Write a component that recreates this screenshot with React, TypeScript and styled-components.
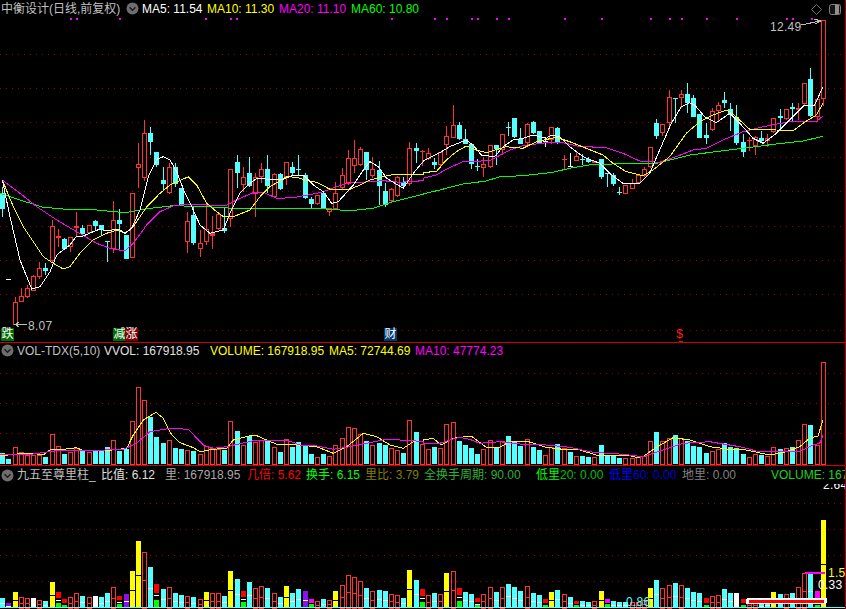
import React from "react";
import styled, { createGlobalStyle } from "styled-components";

const Global = createGlobalStyle`
  html, body { margin: 0; padding: 0; background: #000; overflow: hidden; }
  body { font-family: "Liberation Sans", "Noto Sans CJK SC", sans-serif; }
`;

const Screen = styled.div`
  width: 846px;
  height: 609px;
  box-sizing: border-box;
  border-right: 1px solid #a80000;
  background: #000;
  display: flex;
  flex-direction: column;
  overflow: hidden;
  position: relative;
`;
const Pane = styled.section<{ $h: number; $top?: boolean }>`
  height: ${(p) => p.$h}px;
  flex: 0 0 auto;
  box-sizing: border-box;
  border-top: ${(p) => (p.$top ? "1px solid #d00000" : "none")};
  position: relative;
  overflow: hidden;
  display: flex;
  flex-direction: column;
`;
const Legend = styled.header<{ $h: number }>`
  height: ${(p) => p.$h}px;
  flex: 0 0 auto;
  display: flex;
  align-items: center;
  padding-left: 1px;
  white-space: pre;
  font-size: 12px;
  line-height: 14px;
  overflow: hidden;
`;
const Item = styled.span<{ $c: string; $w: number }>`
  color: ${(p) => p.$c};
  flex: 0 0 ${(p) => p.$w}px;
  overflow: hidden;
`;
const Sub = styled.span<{ $c: string }>`
  color: ${(p) => p.$c};
`;
const Disc = styled.svg`
  flex: 0 0 13px;
  width: 13px;
  height: 13px;
  margin-right: 3px;
`;
const Plot = styled.svg`
  display: block;
  flex: 1 1 0;
  min-height: 0;
  width: 846px;
  shape-rendering: crispEdges;
`;
const Label = styled.text<{ $c: string }>`
  fill: ${(p) => p.$c};
  font-family: "Liberation Sans", sans-serif;
  font-size: 12px;
  letter-spacing: 0.3px;
`;
const Badge = styled.span<{ $x: number; $bg: string; $c?: string }>`
  position: absolute;
  left: ${(p) => p.$x}px;
  bottom: 1px;
  width: 13px;
  height: 13px;
  background: ${(p) => p.$bg};
  color: ${(p) => p.$c || "#fff"};
  font-size: 12px;
  line-height: 13px;
  text-align: center;
`;
const Tools = styled.div`
  position: absolute;
  top: 4px;
  right: 4px;
  display: flex;
  gap: 7px;
  align-items: center;
`;

const RED = "#ff3232";
const CYAN = "#54ffff";
const YEL = "#ffff00";
const MAG = "#ff00ff";
const GRN = "#00ff00";

type K = "r" | "c" | "w" | "f";
// top, bottom, high, low, kind  (screen pixels)
const C: [number, number, number, number, K][] = [
  [193,209,187,217,"c"],[279,280,279,280,"w"],[302,325,297,325,"r"],[296,302,288,302,"r"],[288,297,285,298,"r"],[276,291,275,291,"r"],
  [268,277,262,279,"r"],[268,271,263,275,"c"],[226,261,220,262,"r"],[236,238,229,247,"f"],[239,249,238,250,"c"],[237,247,237,252,"r"],
  [226,228,212,237,"f"],[228,234,225,236,"c"],[225,233,225,234,"r"],[221,226,220,230,"c"],[225,230,225,235,"c"],[241,242,241,262,"c"],
  [220,249,201,253,"r"],[220,224,209,250,"c"],[235,259,235,259,"c"],[193,258,193,258,"r"],[164,168,143,188,"r"],[133,178,120,181,"r"],
  [133,142,127,155,"c"],[152,165,152,167,"c"],[180,184,167,190,"c"],[167,193,163,194,"r"],[167,184,163,187,"c"],[188,205,188,205,"c"],
  [221,242,212,253,"r"],[215,243,207,245,"c"],[243,249,230,257,"r"],[229,242,205,245,"r"],[233,236,216,249,"f"],[214,229,213,230,"r"],
  [228,231,207,233,"c"],[169,219,169,227,"r"],[162,173,155,188,"c"],[177,185,167,192,"r"],[173,186,157,187,"c"],[177,194,173,217,"r"],
  [169,177,163,183,"r"],[169,186,155,193,"c"],[174,197,173,198,"r"],[174,189,173,190,"c"],[162,177,162,185,"r"],[167,173,162,175,"c"],
  [169,170,155,175,"c"],[175,198,173,199,"c"],[199,204,197,208,"c"],[195,204,195,205,"r"],[193,208,192,209,"c"],[208,212,208,216,"r"],
  [193,209,182,210,"r"],[175,188,168,190,"r"],[158,183,150,185,"r"],[158,166,140,173,"r"],[149,165,147,166,"r"],[152,170,152,180,"c"],
  [169,176,157,178,"r"],[170,186,161,205,"c"],[191,205,183,207,"c"],[189,201,188,202,"r"],[177,196,176,197,"r"],[182,186,177,189,"c"],
  [148,184,142,186,"r"],[148,151,143,163,"c"],[151,152,150,166,"f"],
  [153,159,148,160,"r"],[162,165,158,169,"c"],[152,165,152,168,"r"],[136,145,126,155,"r"],[125,138,105,138,"r"],[125,139,122,140,"c"],
  [139,144,129,144,"c"],[144,164,143,169,"c"],[166,167,159,171,"c"],[164,168,157,177,"r"],[145,167,145,168,"r"],[145,149,145,165,"c"],
  [134,150,134,155,"r"],[127,128,122,136,"c"],[118,137,118,138,"c"],[139,144,128,144,"c"],[124,143,123,146,"r"],[122,133,121,134,"c"],
  [131,144,131,144,"c"],[141,142,137,147,"w"],[127,140,127,144,"r"],[128,143,127,144,"c"],[159,160,155,169,"r"],[166,167,153,167,"w"],
  [156,161,152,161,"r"],[159,160,154,165,"c"],[159,162,157,163,"c"],[161,163,161,163,"f"],[159,177,159,179,"c"],[173,174,173,187,"c"],
  [175,184,173,186,"c"],[192,193,187,195,"c"],[185,194,185,194,"r"],[183,189,179,189,"r"],[175,183,175,183,"r"],[169,176,167,177,"r"],
  [147,167,147,168,"r"],[123,136,119,139,"c"],[124,133,124,136,"r"],[97,123,90,127,"r"],[98,99,98,123,"c"],[94,98,90,108,"r"],
  [94,103,83,113,"c"],[98,117,95,117,"c"],[114,138,114,138,"c"],[135,138,123,144,"c"],[111,130,108,131,"r"],[105,111,102,122,"r"],
  [100,103,92,108,"c"],[109,115,103,131,"c"],[117,143,105,145,"c"],[142,152,134,157,"c"],[140,141,137,151,"f"],[137,146,136,155,"r"],
  [138,141,131,143,"c"],[138,141,134,147,"r"],[118,132,118,133,"r"],[116,118,109,131,"c"],[109,119,109,120,"r"],[107,109,103,122,"c"],
  [108,110,103,120,"f"],[83,104,83,105,"r"],[79,116,68,117,"c"],[99,117,98,122,"r"],[20,99,20,106,"r"],
];

// positive: red bar, negative: cyan bar (zoomed units of the volume pane)
const V = [
  -340,-357,322,337,344,344,345,-351,283,319,-342,336,323,-331,335,-333,-333,-322,301,-332,-327,244,142,181,
  -231,-291,-309,301,-324,-327,331,-333,343,318,324,328,-331,244,-273,315,-287,307,301,-303,322,-336,298,-321,-306,-316,-342,352,-342,349,316,295,262,265,282,-303,316,-309,-315,324,330,-339,241,-276,312,
  328,-321,325,253,247,-303,-315,-324,-342,328,301,-322,304,-288,-304,-317,298,-322,-330,346,322,-313,325,-337,349,-348,-351,351,-315,-345,-348,-354,355,353,352,349,304,-276,304,295,-285,293,-303,-318,-321,-339,333,328,-309,-320,-323,-342,351,343,-344,348,322,-327,325,-321,301,253,-255,316,67,
];

type R = { k: "c" | "r" | "y" | "w" | "p"; t: number } | { k: "s" | "m"; t: number; b: number; g: number };
const c = (t: number): R => ({ k: "c", t });
const r = (t: number): R => ({ k: "r", t });
const y = (t: number): R => ({ k: "y", t });
const w = (t: number): R => ({ k: "w", t });
const p = (t: number): R => ({ k: "p", t });
const s = (t: number, b: number, g: number): R => ({ k: "s", t, b, g });
const m = (t: number, b: number, g: number): R => ({ k: "m", t, b, g });
const Q: R[] = [
  c(399),p(414),y(381),r(397),r(400),w(400),r(406),c(408),y(351),s(381,399,414),s(402,414,419),r(397),r(385),c(393),r(397),w(393),c(397),c(384),r(366),s(393,405,417),p(388),y(318),y(228),r(262),
  c(306),s(357,384,405),c(372),r(366),c(384),c(391),r(394),c(396),r(403),y(381),r(385),r(385),c(393),y(318),c(342),s(378,396,411),c(351),r(369),r(363),c(369),r(384),c(396),y(363),c(384),c(372),p(378),m(402,415,417),r(408),c(402),r(405),y(378),r(360),r(331),r(337),r(348),c(369),r(378),c(375),c(378),r(387),r(390),c(399),y(315),c(345),s(372,393,411),
  r(390),c(384),r(387),y(324),r(318),s(369,390,408),c(381),c(387),s(399,412,420),r(387),r(366),c(381),r(366),c(357),c(366),c(378),r(363),c(384),c(390),s(402,414,420),y(381),c(375),r(387),c(396),s(408,417,421),c(408),c(411),r(408),y(378),m(402,415,417),c(408),c(411),c(411),r(411),r(411),r(405),y(369),c(345),r(369),r(360),c(354),r(360),c(369),c(381),c(384),s(399,413,420),r(393),r(390),c(372),c(384),w(384),s(402,414,420),r(411),r(408),c(415),c(411),y(381),c(387),r(387),c(384),r(366),r(324),c(328),m(378,405,420),y(165),
];

const px = (i: number) => Math.floor(2.67 + 6.17 * i);
const conv = (a: number[], ox: number, oy: number) => {
  const out: string[] = [];
  for (let i = 0; i < a.length; i += 2) out.push(`${(a[i] / 3 + ox).toFixed(1)},${(a[i + 1] / 3 + oy).toFixed(1)}`);
  return out.join(" ");
};
const line = (l: number[], rr: number[], oy: number, roy = oy) => `${conv(l, 0, oy)} ${conv(rr, 423, roy)}`;

const MA5 = line(
  [7,90,30,200,60,330,95,417,120,410,150,365,170,315,190,300,210,285,230,258,250,258,280,245,300,237,320,243,355,237,375,250,395,235,420,180,445,80,470,28,490,20,510,30,530,65,555,130,575,170,600,225,630,250,670,240,690,190,720,130,750,100,770,85,810,88,850,88,880,75,910,75,940,105,970,125,995,160,1015,155,1060,105,1090,60,1110,35,1135,50,1160,85,1210,115,1240,70,1269,35],
  [0,483,25,470,50,458,80,440,130,420,150,435,175,465,215,470,240,440,270,420,300,415,330,405,370,415,385,405,410,410,440,440,480,470,530,490,560,520,600,550,650,550,680,520,710,450,745,370,775,320,800,308,815,315,845,350,880,368,920,340,960,380,990,415,1020,430,1060,400,1100,360,1145,315,1175,315,1200,260],
  150, 0
);
const MA10 = line(
  [7,90,40,170,70,230,100,275,130,320,160,340,190,357,210,350,240,310,280,270,320,250,350,240,375,250,400,230,440,170,480,130,510,105,565,80,590,105,620,160,650,185,670,200,700,200,750,180,780,140,810,110,860,80,890,82,920,92,950,97,990,118,1045,120,1080,105,1110,90,1150,80,1185,72,1269,72],
  [0,517,40,515,70,480,100,455,130,438,160,450,190,458,250,440,300,445,340,425,400,412,440,425,490,445,540,465,570,490,610,515,660,527,690,510,740,470,790,400,830,365,870,345,910,330,930,342,980,388,1060,390,1110,393,1140,370,1180,345,1200,310],
  150, 0
);
const MA20 = line(
  [7,90,60,130,110,170,170,210,230,245,290,280,330,295,375,303,400,280,440,225,480,185,520,168,560,162,620,165,680,165,720,145,760,128,790,127,830,145,880,143,960,128,1040,100,1110,95,1150,92,1200,97,1269,92],
  [0,535,40,525,75,505,120,485,200,482,260,450,300,437,370,428,420,428,470,440,545,442,600,460,650,483,710,487,760,470,810,450,850,445,900,420,960,395,1020,380,1100,365,1180,365,1200,348],
  150, 0
);
const MA60 = line(
  [0,130,60,150,130,172,200,178,290,180,375,188,450,175,520,167,620,170,700,175,950,175,1050,182,1120,175,1180,155,1269,133],
  [0,582,50,570,120,552,190,543,230,530,300,527,390,517,440,505,510,493,700,490,800,465,960,445,1060,432,1140,423,1200,409],
  150, 0
);
const VY = line(
  [0,348,50,342,100,340,130,345,150,330,190,328,230,323,250,332,330,331,380,325,400,285,430,240,468,217,490,235,515,285,540,308,580,323,600,335,640,328,680,325,700,300,750,287,770,287,800,300,830,313,890,315,950,320,1000,340,1040,320,1090,280,1130,290,1170,315,1210,325,1240,305,1269,303],
  [0,300,30,295,55,315,90,295,145,288,190,322,230,322,260,305,310,303,370,322,420,328,470,330,520,345,610,345,640,352,660,350,700,322,750,293,800,300,860,320,920,328,970,330,1040,345,1090,335,1130,320,1160,295,1185,288,1200,240],
  340
);
const VM = line(
  [0,345,100,342,170,332,260,332,370,328,410,310,450,275,510,265,565,268,610,315,640,325,680,320,700,316,770,300,860,300,900,315,950,318,1000,328,1050,320,1090,312,1160,298,1240,302,1269,305],
  [0,310,50,310,80,300,110,292,140,298,170,310,230,305,300,313,370,315,440,322,510,337,600,343,660,350,720,330,780,310,860,305,950,320,1000,333,1130,335,1170,315,1190,310,1200,285],
  340
);

const DOTS = [210,228,357,615,690,708,1173].map((v) => v / 3).concat([33,69,144,162,219,255,423,534,681,738,774,849,939,1089,1107,1164].map((v) => v / 3 + 423));

const GridLines = ({ ys }: { ys: number[] }) => (
  <>
    {ys.map((v) => (
      <line key={v} x1={0} x2={845} y1={v + 0.5} y2={v + 0.5} stroke="#a00000" strokeDasharray="1 5" />
    ))}
  </>
);

const Chevron = () => (
  <Disc viewBox="0 0 13 13">
    <circle cx="6.5" cy="6.5" r="6" fill="#6e6e6e" />
    <path d="M3.5 5.2 L6.5 8.2 L9.5 5.2" fill="none" stroke="#1c1c1c" strokeWidth="1.4" />
  </Disc>
);

const MainPlot = () => (
  <Plot viewBox="0 17 846 325">
    <GridLines ys={[54, 88, 122, 157, 191, 226, 260, 294, 330]} />
    {DOTS.map((d, i) => (
      <rect key={i} x={Math.floor(d)} y={18} width={2} height={2} fill={MAG} />
    ))}
    {C.map(([t, b, h, l, k], i) => {
      const x = px(i);
      const col = k === "c" ? CYAN : k === "w" ? "#fff" : RED;
      return (
        <g key={i}>
          <line x1={x + 0.5} x2={x + 0.5} y1={h} y2={l} stroke={col} />
          {k === "c" || b - t < 2 ? (
            <rect x={x - 2} y={t} width={5} height={Math.max(b - t, 1)} fill={col} />
          ) : (
            <rect x={x - 1.5} y={t + 0.5} width={4} height={b - t - 1} fill={k === "f" ? col : "#000"} stroke={col} />
          )}
        </g>
      );
    })}
    <polyline points={MA60} fill="none" stroke={GRN} />
    <polyline points={MA20} fill="none" stroke={MAG} />
    <polyline points={MA10} fill="none" stroke={YEL} />
    <polyline points={MA5} fill="none" stroke="#fff" />
    <Label $c="#c0c0c0" x={770} y={31}>12.49</Label>
    <path d="M801 25 L820 21 M814 19 L821 21 L815 24" fill="none" stroke="#c0c0c0" />
    <Label $c="#c0c0c0" x={28} y={330}>8.07</Label>
    <path d="M27 324.5 L15 324.5 M19 322 L15 324.5 L19 327" fill="none" stroke="#c0c0c0" />
    <rect x={679} y={340} width={4} height={2} fill="#ff0000" />
  </Plot>
);

const VolumePlot = () => (
  <Plot viewBox="0 358 846 107">
    <GridLines ys={[373, 403, 433]} />
    {V.map((v, i) => {
      const x = px(i);
      const top = Math.round(Math.abs(v) / 3 + 340);
      return v < 0 ? (
        <rect key={i} x={x - 2} y={top} width={5} height={464 - top} fill={CYAN} />
      ) : (
        <rect key={i} x={x - 1.5} y={top + 0.5} width={4} height={463.5 - top} fill="#000" stroke={RED} />
      );
    })}
    <polyline points={VY} fill="none" stroke={YEL} />
    <polyline points={VM} fill="none" stroke={MAG} />
  </Plot>
);

const toY = (z: number) => Math.round(z / 3 + 465);
const BASE = 608;
const RatioPlot = () => (
  <Plot viewBox="0 484 846 125">
    <GridLines ys={[503, 529, 555, 581]} />
    {Q.map((q, i) => {
      const x = px(i);
      const t = toY(q.t);
      if (q.k === "s" || q.k === "m") {
        const b = toY(q.b);
        const g = toY(q.g);
        return (
          <g key={i}>
            <rect x={x - 2} y={t} width={5} height={b - t} fill={q.k === "s" ? "#ff0000" : MAG} />
            <rect x={x - 2} y={b + 2} width={5} height={1} fill="#fff" />
            <rect x={x - 2} y={g} width={5} height={BASE - g} fill={GRN} />
          </g>
        );
      }
      const mid = Math.round((t + BASE) / 2);
      if (q.k === "r")
        return (
          <g key={i}>
            <rect x={x - 1.5} y={t + 0.5} width={4} height={BASE - t} fill="#000" stroke={RED} />
            <rect x={x - 1} y={mid} width={3} height={1} fill={RED} />
          </g>
        );
      const col = q.k === "c" ? CYAN : q.k === "y" ? YEL : q.k === "w" ? "#fff" : "#8a10f0";
      const tick = q.k === "c" ? "#fff" : q.k === "y" ? "#000" : q.k === "p" ? "#fff" : "#000";
      return (
        <g key={i}>
          <rect x={x - 2} y={t} width={5} height={BASE - t} fill={col} />
          {q.k !== "w" && <rect x={x - 2} y={mid} width={5} height={1} fill={tick} />}
        </g>
      );
    })}
    <rect x={0} y={607} width={845} height={1} fill={CYAN} />
    <Label $c="#ffffff" x={823} y={489}>2.64</Label>
    <Label $c={CYAN} x={626} y={606}>0.86</Label>
    <rect x={805} y={572} width={20} height={2} fill={MAG} />
    <Label $c={YEL} x={828} y={577}>1.5</Label>
    <Label $c="#ffffff" x={818} y={589}>0.33</Label>
    <rect x={746} y={598} width={81} height={6} rx={2} fill="#fff" />
    <rect x={749} y={600} width={75} height={3} fill="#ff0000" />
  </Plot>
);

export default function App() {
  return (
    <Screen>
      <Global />
      <Pane $h={342}>
        <Legend $h={17}>
          <Item $c="#c0c0c0" $w={125}>中衡设计(日线,前复权)</Item>
          <Chevron />
          <Item $c="#ffffff" $w={65}>MA5: 11.54</Item>
          <Item $c={YEL} $w={72}>MA10: 11.30</Item>
          <Item $c={MAG} $w={72}>MA20: 11.10</Item>
          <Item $c={GRN} $w={72}>MA60: 10.80</Item>
        </Legend>
        <MainPlot />
        <Badge $x={1} $bg="#006c00">跌</Badge>
        <Badge $x={113} $bg="#006c00">减</Badge>
        <Badge $x={125} $bg="#800000">涨</Badge>
        <Badge $x={384} $bg="#003a70">财</Badge>
        <Badge $x={673} $bg="#000" $c="#ff2020">$</Badge>
        <Tools>
          <svg width="11" height="11" viewBox="0 0 11 11">
            <path d="M5.5 0.5 L10.5 5.5 L5.5 10.5 L0.5 5.5 Z" fill="none" stroke="#707070" />
          </svg>
          <svg width="12" height="11" viewBox="0 0 12 11">
            <rect x="0.5" y="0.5" width="11" height="10" rx="2" fill="#141414" stroke="#808080" />
            <rect x="6" y="1" width="4" height="9" fill="#909090" />
          </svg>
        </Tools>
      </Pane>
      <Pane $h={123} $top>
        <Legend $h={15}>
          <Chevron />
          <Item $c="#c0c0c0" $w={87}>VOL-TDX(5,10)</Item>
          <Item $c="#e0e0e0" $w={106}>VVOL: 167918.95</Item>
          <Item $c={YEL} $w={119}>VOLUME: 167918.95</Item>
          <Item $c={YEL} $w={86}>MA5: 72744.69</Item>
          <Item $c={MAG} $w={100}>MA10: 47774.23</Item>
        </Legend>
        <VolumePlot />
      </Pane>
      <Pane $h={144} $top>
        <Legend $h={18}>
          <Chevron />
          <Item $c="#c0c0c0" $w={84}>九五至尊里柱_</Item>
          <Item $c="#e0e0e0" $w={64}>比值: 6.12</Item>
          <Item $c="#a8a8a8" $w={82}>里: 167918.95</Item>
          <Item $c="#ff0000" $w={59}>几倍: 5.62</Item>
          <Item $c={GRN} $w={59}>换手: 6.15</Item>
          <Item $c="#808000" $w={59}>里比: 3.79</Item>
          <Item $c="#30b030" $w={112}>全换手周期: 90.00</Item>
          <Item $c={GRN} $w={73}>低里<Sub $c="#00c000">20: 0.00</Sub></Item>
          <Item $c="#0000ff" $w={73}>低里<Sub $c="#0000d8">60: 0.00</Sub></Item>
          <Item $c="#808080" $w={89}>地里: 0.00</Item>
          <Item $c="#20d020" $w={74}>VOLUME: 167918.95</Item>
        </Legend>
        <RatioPlot />
      </Pane>
    </Screen>
  );
}
